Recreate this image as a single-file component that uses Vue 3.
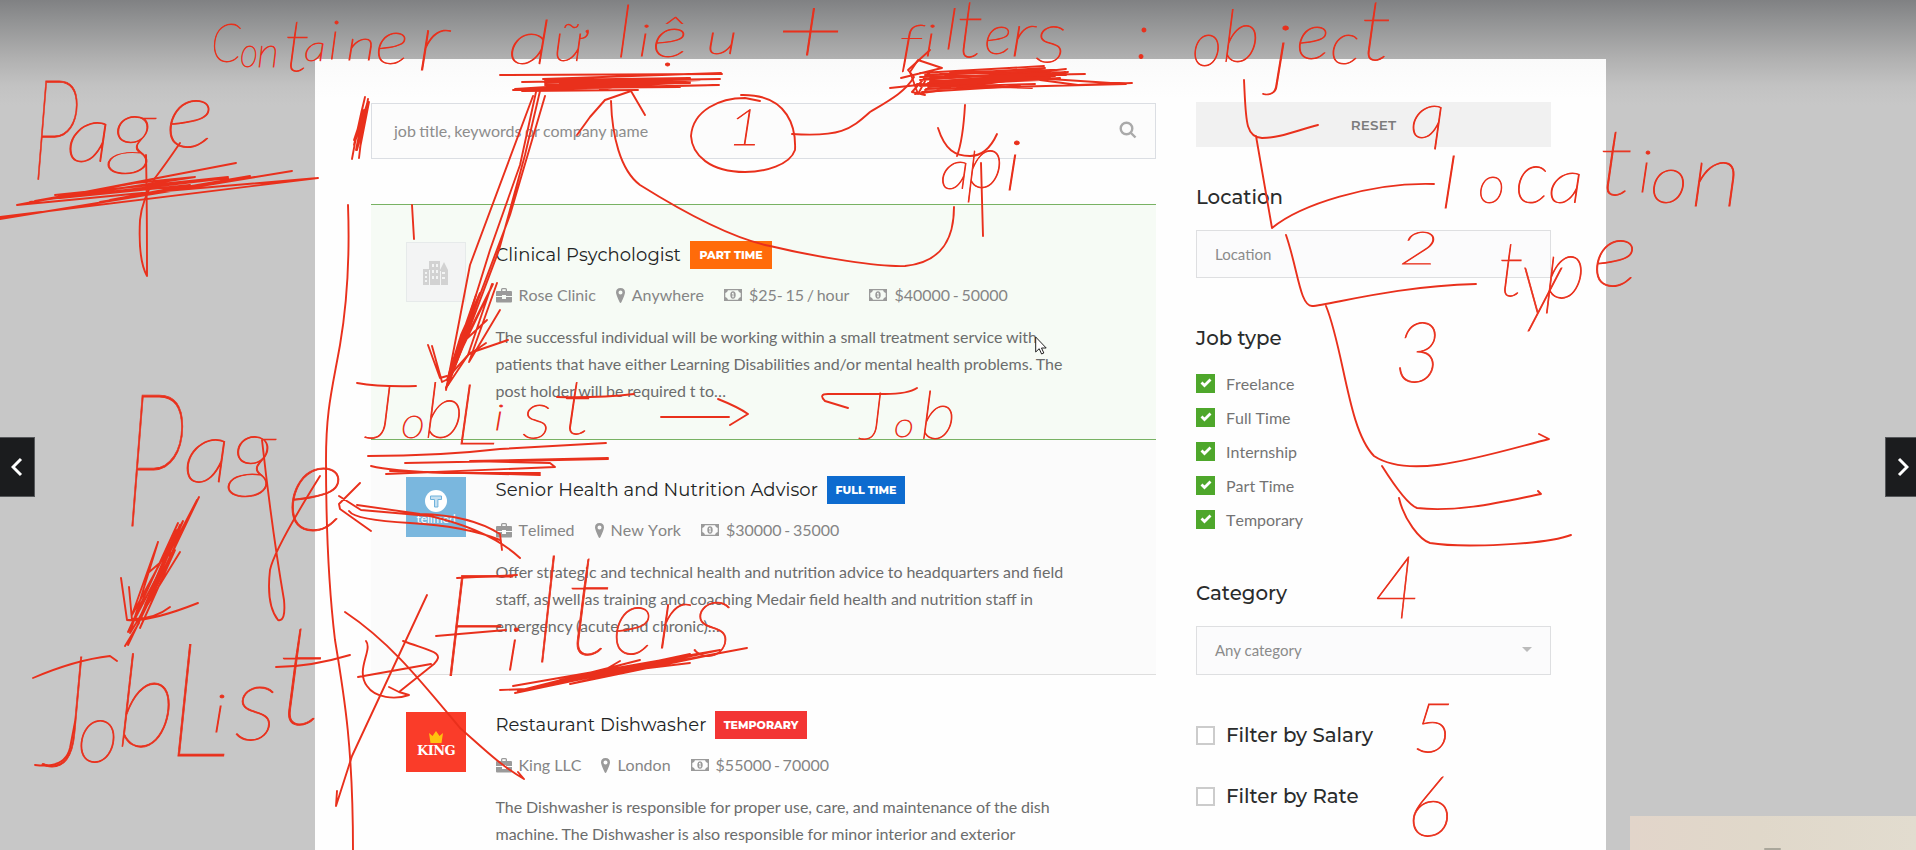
<script setup>
const jobs = [
  { title: 'Clinical Psychologist', badge: 'Part time', kind: 'part', logo: 'none', company: 'Rose Clinic', place: 'Anywhere', pay: ['$25- 15 / hour', '$40000 - 50000'],
    lines: ['The successful individual will be working within a small treatment service with', 'patients that have either Learning Disabilities and/or mental health problems. The', 'post holder will be required t to…'] },
  { title: 'Senior Health and Nutrition Advisor', badge: 'Full time', kind: 'full', logo: 'telimed', company: 'Telimed', place: 'New York', pay: ['$30000 - 35000'],
    lines: ['Offer strategic and technical health and nutrition advice to headquarters and field', 'staff, as well as training and coaching Medair field health and nutrition staff in', 'emergency (acute and chronic)…'] },
  { title: 'Restaurant Dishwasher', badge: 'Temporary', kind: 'temp', logo: 'king', company: 'King LLC', place: 'London', pay: ['$55000 - 70000'],
    lines: ['The Dishwasher is responsible for proper use, care, and maintenance of the dish', 'machine. The Dishwasher is also responsible for minor interior and exterior'] },
]
const types = ['Freelance', 'Full Time', 'Internship', 'Part Time', 'Temporary']

// Handwritten notes: [character, x, width, baseline, font size]
const notes = [
  ['C', 211, 30, 62, 54], ['o', 240, 18, 67, 42], ['n', 257, 22, 67, 42], ['t', 284, 26, 71, 72], ['a', 304, 22, 61, 36], ['i', 328, 12, 59, 54], ['n', 346, 30, 60, 42], ['e', 375, 34, 64, 62], ['r', 416, 34, 70, 80],
  ['d', 508, 42, 64, 60], ['ữ', 553, 34, 61, 54], ['l', 616, 16, 57, 72], ['i', 638, 12, 56, 44], ['ệ', 652, 36, 57, 56], ['u', 706, 32, 54, 42],
  ['+', 776, 68, 64, 96],
  ['f', 898, 24, 64, 56], ['i', 924, 12, 56, 44], ['l', 944, 14, 49, 56], ['t', 956, 28, 57, 80], ['e', 984, 28, 54, 54], ['r', 1010, 26, 56, 60], ['s', 1035, 32, 62, 70], [':', 1136, 14, 58, 62],
  ['o', 1192, 30, 66, 62], ['b', 1222, 38, 62, 72], ['j', 1271, 20, 80, 76], ['e', 1296, 34, 59, 64], ['c', 1330, 30, 64, 58], ['t', 1360, 32, 60, 84],
  ['P', 31, 48, 180, 140], ['a', 66, 46, 162, 80], ['g', 110, 46, 158, 84], ['e', 165, 50, 147, 94],
  ['1', 727, 36, 145, 50], ['a', 940, 30, 189, 54], ['p', 966, 38, 188, 76], ['i', 1004, 18, 190, 70],
  ['q', 1410, 36, 138, 64],
  ['l', 1440, 18, 208, 72], ['o', 1478, 27, 203, 52], ['c', 1515, 34, 203, 72], ['a', 1548, 36, 203, 60], ['t', 1598, 36, 195, 92], ['i', 1638, 14, 192, 58], ['o', 1650, 38, 203, 66], ['n', 1690, 52, 206, 88],
  ['2', 1399, 40, 264, 46], ['t', 1498, 26, 296, 76], ['y', 1520, 42, 314, 94], ['p', 1544, 42, 298, 84], ['e', 1592, 46, 286, 92],
  ['3', 1394, 48, 382, 84], ['4', 1374, 46, 618, 86], ['5', 1412, 42, 752, 68], ['6', 1406, 46, 836, 84],
  ['P', 123, 62, 526, 186], ['a', 183, 48, 482, 86], ['g', 230, 46, 480, 88], ['e', 286, 60, 530, 124],
  ['J', 44, 44, 766, 154], ['o', 77, 42, 762, 84], ['b', 116, 60, 746, 128], ['L', 168, 62, 756, 158], ['i', 212, 14, 732, 52], ['s', 234, 44, 740, 106], ['t', 276, 50, 724, 140],
  ['J', 366, 28, 438, 74], ['o', 401, 24, 438, 44], ['b', 424, 40, 438, 76], ['L', 454, 44, 444, 84], ['i', 494, 10, 430, 36], ['s', 522, 30, 438, 66], ['t', 562, 30, 434, 76],
  ['J', 860, 24, 439, 66], ['o', 894, 20, 437, 34], ['b', 920, 36, 439, 66],
  ['F', 440, 72, 676, 142], ['i', 505, 16, 670, 60], ['l', 534, 26, 662, 146], ['t', 565, 48, 654, 140], ['e', 612, 42, 654, 94], ['r', 656, 34, 648, 88], ['s', 692, 42, 656, 108],
]

const strokes = [
  // underlines and scribbles
  'M17 205 236 163M0 219 292 171M30 202 195 177M0 217 318 178M55 195 228 177M17 205 142 193 318 178M100 202 292 171M35 201 135 183 195 177M40 200 228 178M60 198 190 185 110 200 250 176',
  'M146 155Q147 200 147 276Q138 260 140 220 142 200 155 178 165 165 180 143',
  'M365 97Q358 125 352 159M368 99Q362 130 359 158M365 97 354 145 367 104 357 150 369 102 360 148M364 110 354 140 362 120 356 150 366 110',
  'M500 75 722 74M522 82 720 79M543 79 721 73M513 90 718 85M522 91 638 90M545 80 690 78 515 89 719 85M545 83 700 80 560 87 690 82 550 89 680 83M550 81 660 80M545 85 690 83M560 84 650 83 600 89 630 86M550 88 680 87',
  'M901 78 942 68 918 60 910 72 918 94 930 72 912 92 925 95M920 73 1044 66M920 77 1085 74M890 88 1066 69M917 84 1032 88M915 94 1068 72M926 89 1126 84 1050 79M920 80 1060 70 925 85 1055 76 930 82 1066 72 925 90M1040 80 1078 85 1132 83M925 75 1050 71M920 86 1060 78',
  'M928 75 1045 68M928 79 1050 73M928 83 1045 78M928 87 1035 84M922 92 1020 86M945 76 1066 75M930 77 1040 75 940 81 1050 77 935 85 1040 80M940 74 1055 70 950 72M930 81 1060 79',
  // circled number and connectors
  'M741 95C790 94 796 130 795 150 790 165 765 172 745 172 710 172 692 155 691 136 693 110 720 98 745 98L760 101',
  'M792 134C840 137 850 130 870 112 890 100 905 92 914 77L908 70 930 50',
  'M577 135 590 117 605 100 631 91 645 115M611 101C612 135 620 170 640 185 680 210 730 238 770 246 820 258 880 267 905 266 945 262 954 235 954 207',
  'M965 105Q963 140 957 156M938 128C945 150 955 156 970 156 984 156 992 145 997 134M981 163 983 236',
  // arrow to the job list
  'M536 92 520 165 490 250 448 385M540 91 525 155 499 250 450 380M545 96 510 215 478 300 446 388M533 96 470 265 446 390',
  'M492 284 468 355 446 388 480 293 461 335 447 380 493 284 459 352M497 283 469 362 500 310M487 320 460 345 450 380M476 295 462 335 452 370 474 305 458 350 472 315 450 378 470 330',
  'M428 345 440 378 447 376M432 346 442 382 450 378M450 375 470 353 508 340M470 354 486 343',
  'M357 383Q380 387 416 386M557 397Q600 398 634 394M368 456Q440 456 500 449L606 443M405 463 608 459M371 466Q390 471 445 473L540 473M386 474 555 467 550 463 470 461 608 458M390 471 540 475',
  'M661 417 729 417M718 399Q738 407 748 414L730 425M848 408 825 401Q818 394 828 394L885 394Q908 394 917 388',
  // tall list bracket
  'M348 205C350 260 346 310 340 345 332 390 326 410 326 460 326 530 329 590 335 640 345 700 353 750 353 850M412 205 414 239',
  // left page arrow
  'M199 497 128 645M178 523 128 632 197 500 140 620 183 521 132 615 158 542 130 633 180 552M158 542 148 573 175 550 140 628M121 578 127 620 132 620 129 587M127 620Q150 622 198 603M133 619Q155 619 170 607M125 646 139 623',
  'M176 530 145 605 180 525 138 622 174 550 150 600',
  'M262 440Q272 530 284 600 286 622 278 620 266 605 270 570 Q274 550 320 476',
  'M33 678Q75 660 110 656L117 661M276 667Q310 667 350 655M35 765Q65 769 70 748L75 722',
  // filters arrows and cross
  'M339 496 361 510 430 516Q490 530 520 558M357 505 420 514Q470 515 500 534L502 550M349 511Q355 520 410 523 465 526 500 540M360 483 339 504 340 509 371 531',
  'M345 612C390 642 420 680 460 728 485 750 500 765 524 779L518 772M427 595 352 756 336 806 337 791M403 641C430 651 446 652 434 664L399 692 389 687M358 677 431 664M366 641C373 650 355 670 367 686 375 698 395 700 409 695L399 692',
  'M500 690 527 689 747 648M513 686 720 650 515 693M518 691 640 660M540 686 690 654M560 680 700 654 570 684 720 653M590 675 690 663M608 668 620 661M457 578 517 575M436 636 506 630M580 676 690 656 600 673 680 661',
  // filter tree
  'M1244 80C1246 120 1245 137 1262 138 1280 138 1295 131 1318 125M1256 136 1272 228C1300 205 1370 182 1434 184M1286 235C1298 270 1300 306 1312 306 1330 305 1395 286 1476 284',
  'M1326 306C1344 350 1348 430 1374 456 1410 480 1480 457 1549 439L1539 434M1382 466Q1406 504 1417 508C1460 513 1510 500 1541 494L1538 491M1399 498C1404 520 1420 540 1430 543 1460 548 1545 545 1571 535',
]
</script>

<template>
  <div class="stage">
    <button class="nav prev" aria-label="Previous"><svg viewBox="0 0 12 20"><path d="M10 2 2 10l8 8" /></svg></button>
    <button class="nav next" aria-label="Next"><svg viewBox="0 0 12 20"><path d="m2 2 8 8-8 8" /></svg></button>
    <div class="webcam"><i></i></div>

    <main class="panel">
      <section class="results">
        <div class="search">
          <span>job title, keywords or company name</span>
          <svg viewBox="0 0 18 18"><circle cx="7.5" cy="7.5" r="5.8" /><path d="m12 12 4.5 4.5" /></svg>
        </div>
        <article v-for="(job, i) in jobs" :key="job.title" class="job" :class="['row' + i]">
          <div class="logo" :class="job.logo">
            <svg v-if="job.logo === 'none'" viewBox="0 0 28 28" width="28" height="28">
              <path fill="#d2d2d2" fill-rule="evenodd" d="M1 11h6V3h11v9l4-8 4 8v15H1zM3 14v2h2v-2zm0 4v2h2v-2zm0 4v2h2v-2zM10 6v3h2V6zm4 0v3h2V6zm-4 6v3h2v-3zm4 0v3h2v-3zm-4 6v3h2v-3zm4 0v3h2v-3zm6-4v2h3v-2zm0 5v2h3v-2zM7 12v15h1V12zm11 1v14h1V13z" />
            </svg>
            <template v-else-if="job.logo === 'telimed'">
              <svg viewBox="0 0 22 22" width="22" height="22"><circle cx="11" cy="11" r="11" fill="#fff" /><path d="M5.500 6h11v3.500h-3.600V17H9.500V9.500h-4z" fill="#c6e0f1" stroke="#6fb2dc" /></svg>
              <span>telimed</span>
            </template>
            <template v-else>
              <svg viewBox="0 0 16 12" width="16" height="12"><path d="M1 2 4.500 5 8 0l3.500 5L15 2l-1.500 10h-11z" fill="#ffc20e" /></svg>
              <span>KING</span>
            </template>
          </div>
          <div class="body">
            <h2><span class="name">{{ job.title }}</span><b :class="job.kind">{{ job.badge }}</b></h2>
            <div class="meta">
              <span><svg width="16" height="15" viewBox="0 0 16 15"><path fill-rule="evenodd" d="M5 3V1.500Q5 0 6.500 0h3Q11 0 11 1.500V3h4q1 0 1 1v4h-6V7H6v1H0V4q0-1 1-1zM6.300 3h3.400V1.300H6.300zM0 9h6v2h4V9h6v4.500q0 1-1 1H1q-1 0-1-1z" /></svg>{{ job.company }}</span>
              <span><svg width="9" height="15" viewBox="0 0 9 15"><path fill-rule="evenodd" d="M4.500 0Q9 0 9 4.500 9 6.500 5.500 14q-1 2-2 0Q0 6.500 0 4.500 0 0 4.500 0zm0 2.500a2 2 0 1 0 0 4 2 2 0 0 0 0-4z" /></svg>{{ job.place }}</span>
              <span v-for="p in job.pay" :key="p" class="pay"><svg width="18" height="12" viewBox="0 0 18 12"><path fill-rule="evenodd" d="M0 0h18v12H0zM4 1.300Q3.500 3.500 1.300 4v4q2.200.5 2.700 2.700h10q.5-2.200 2.700-2.700V4Q14.500 3.500 14 1.300zM9 2.300q2.700 0 2.700 3.700T9 9.700 6.300 6 9 2.300zM8 4v1h.5v2.500H8v.8h2.200v-.8h-.6V3.800h-.8z" /></svg>{{ p }}</span>
            </div>
            <p><span v-for="l in job.lines" :key="l">{{ l }}</span></p>
          </div>
        </article>
      </section>

      <aside class="filters">
        <button class="reset">RESET</button>
        <h3 class="h-loc">Location</h3>
        <div class="field loc">Location</div>
        <h3 class="h-type">Job type</h3>
        <ul>
          <li v-for="t in types" :key="t"><i class="box on"><svg viewBox="0 0 12 10" width="12" height="10"><path d="m1.500 4.500 3 3 6-6" /></svg></i>{{ t }}</li>
        </ul>
        <h3 class="h-cat">Category</h3>
        <div class="field cat">Any category<i class="caret"></i></div>
        <h3 class="toggle"><i class="box"></i>Filter by Salary</h3>
        <h3 class="toggle"><i class="box"></i>Filter by Rate</h3>
      </aside>
    </main>

    <svg class="ink" viewBox="0 0 1916 850">
      <path v-for="(d, i) in strokes" :key="i" :d="d" />
      <text v-for="(n, i) in notes" :key="'n' + i" :x="n[1]" :y="n[3]" :font-size="n[4]" :textLength="n[2]" lengthAdjust="spacingAndGlyphs">{{ n[0] }}</text>
    </svg>
    <svg class="cursor" viewBox="0 0 12 19"><path d="M.7 1v15l3.500-3.300L6.600 18l2.200-1-2.300-5h4.700z" fill="#fff" stroke="#222" stroke-width="1" /></svg>
  </div>
</template>

<style>
body { overflow: hidden; }
</style>

<style scoped>
* { box-sizing: border-box; }
.stage { position: relative; width: 1916px; height: 850px; overflow: hidden; font-family: Lato, "Open Sans", sans-serif; font-size: 16px; background: linear-gradient(#808183 0, #919293 20px, #b0b0b0 58px, #c2c2c2 85px, #c7c7c7 105px); }
.nav { position: absolute; top: 437px; height: 60px; width: 35px; padding: 0; border: 1px solid #55575a; background: #1b1c1e; }
.nav svg { display: block; width: 12px; height: 20px; fill: none; stroke: #fff; stroke-width: 3; }
.prev { left: 0; border-left: 0; padding-left: 11px; }
.next { left: 1885px; border-right: 0; padding-left: 11px; }
.webcam { position: absolute; left: 1630px; top: 816px; width: 286px; height: 34px; background: linear-gradient(90deg, #e2d5ca, #e0d8ca 45%, #e2dccf); }
.webcam i { position: absolute; left: 134px; top: 32px; width: 17px; height: 2px; background: #aaa79b; border-radius: 2px; }
.panel { display: flex; justify-content: space-between; width: 1291px; height: 791px; margin-left: 315px; position: relative; top: 59px; padding: 43px 55px 0 56px; background: linear-gradient(#fafafa, #fefefe 40px); overflow: hidden; }
.results { width: 785px; padding-top: 1px; flex: none; }
.search { height: 56px; border: 1px solid #dbdee3; background: #fcfcfc; margin-bottom: 45px; padding: 0 18px 2px 22px; display: flex; align-items: center; justify-content: space-between; color: #8d8d8d; word-spacing: -.6px; }
.search svg { width: 18px; height: 18px; fill: none; stroke: #aaa; stroke-width: 2.4; }
.job { height: 235px; border-top: 1px solid #dedede; padding: 37px 35px 0; display: flex; }
.row0 { background: #f6fbf5; border-color: #78b263; }
.row1 { background: #fbfbfb; border-color: #78b263; }
.logo { width: 60px; height: 60px; flex: none; display: flex; flex-direction: column; align-items: center; justify-content: center; color: #fff; }
.none { border: 1px solid #e6eaea; background: #f3f4f4; }
.telimed { background: #7ab7de; justify-content: flex-start; padding-top: 13px; }
.telimed span { font-size: 12px; line-height: 12px; margin-top: 1px; }
.king { background: #fa3c29; padding-top: 5px; }
.king span { font: bold 13px/16px "DejaVu Serif", serif; letter-spacing: -.6px; }
.body { margin-left: 29.500px; margin-top: -1px; }
h2 { margin: 0; height: 28px; display: flex; font: 400 18px/29px Montserrat, Inter, sans-serif; color: #222424; white-space: nowrap; letter-spacing: .08px; }
.row0 .name { width: 194.500px; }
.row1 .name { width: 331.500px; }
.row2 .name { width: 219.500px; }
h2 b { height: 28px; width: 82px; text-align: center; font: 800 11px/28px Montserrat, Inter, sans-serif; text-transform: uppercase; color: #fff; letter-spacing: 0; }
h2 b.part { background: #ff6b0a; }
h2 b.full { background: #0d6bcf; width: 78px; }
h2 b.temp { background: #f33534; width: 92px; }
.meta { display: flex; gap: 20px; margin-top: 14px; height: 24px; line-height: 24px; color: #858585; white-space: nowrap; font-kerning: none; }
.meta span { display: flex; align-items: center; }
.meta .pay { word-spacing: -1.4px; }
.meta svg { margin-right: 7px; fill: #9a9a9a; }
p { margin: 16px 0 0; line-height: 27px; color: #6b6c6c; white-space: nowrap; word-spacing: -.25px; }
p span { display: block; }
.filters { width: 355px; flex: none; color: #737373; }
.reset { display: block; width: 355px; height: 45px; border: 0; padding: 0; background: #f1f1f1; color: #7c7c7c; font: 600 13.500px Montserrat, Inter, sans-serif; letter-spacing: .2px; }
h3 { margin: 0; font: 500 19.800px/24px Montserrat, Inter, sans-serif; color: #2a2c2c; }
.h-loc { margin-top: 38px; }
.field { border: 1px solid #dedfe1; background: #fbfbfc; color: #8b8b8b; font-size: 15px; padding: 0 18px 1px; display: flex; align-items: center; justify-content: space-between; }
.loc { height: 48px; margin-top: 21px; }
.h-type { margin-top: 48px; }
ul { list-style: none; margin: 16px 0 0; padding: 0; }
li { height: 34px; display: flex; align-items: center; gap: 11px; font-kerning: none; }
.box { width: 19px; height: 19px; border: 2px solid #ccc; background: #fff; flex: none; display: flex; align-items: center; justify-content: center; }
.box.on { border: 0; background: #4ea72b; }
.box svg { fill: none; stroke: #fff; stroke-width: 2.8; }
.h-cat { margin-top: 45px; }
.cat { height: 49px; margin-top: 21px; padding-bottom: 2px; }
.caret { border: 5px solid transparent; border-top: 5px solid #bbb; border-bottom: 0; }
.toggle { display: flex; align-items: center; gap: 11px; margin-top: 48px; }
.toggle + .toggle { margin-top: 37px; }
.ink { position: absolute; inset: 0; width: 1916px; height: 850px; pointer-events: none; }
.ink path { fill: none; stroke: #e9301c; stroke-width: 1.9; stroke-linecap: round; stroke-linejoin: round; }
.ink text { font-family: Lato, sans-serif; font-style: italic; font-weight: 200; fill: #e9301c; stroke: #e9301c; stroke-width: .8; }
.cursor { position: absolute; left: 1035px; top: 336px; width: 12px; height: 19px; }
</style>
